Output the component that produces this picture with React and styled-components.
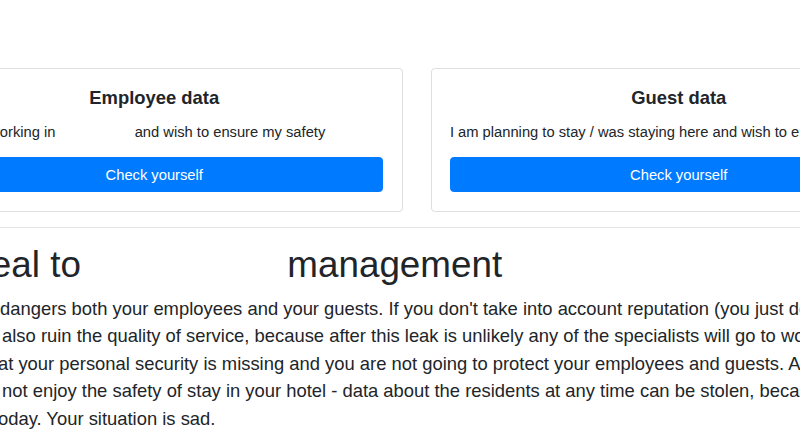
import React from "react";
import styled, { createGlobalStyle } from "styled-components";

const GlobalStyle = createGlobalStyle`
  html, body {
    margin: 0;
    padding: 0;
    background: #fff;
    overflow: hidden;
  }
  body {
    font-family: "Liberation Sans", Arial, Helvetica, sans-serif;
    font-size: 14.72px;
    line-height: 1.5;
    color: #212529;
  }
`;

const Container = styled.div`
  width: 1049px;
  box-sizing: border-box;
  margin-left: -108px;
  padding: 68px 14px 0;
`;

const CardRow = styled.div`
  display: grid;
  grid-template-columns: 1fr 1fr;
  column-gap: 28px;
`;

const Card = styled.div`
  border: 1px solid rgba(0, 0, 0, 0.125);
  border-radius: 3.7px;
  padding: 18.4px;
  min-width: 0;
  overflow: hidden;
`;

const CardTitle = styled.h5`
  margin: 0 0 11.04px;
  font-size: 18.4px;
  font-weight: 700;
  line-height: 1.2;
  text-align: center;
`;

const CardText = styled.p`
  margin: 0 0 14.72px;
  white-space: nowrap;
`;

const Redacted = styled.span`
  display: inline-block;
  width: ${(p) => p.$w}px;
`;

const CheckButton = styled.button`
  display: block;
  width: 100%;
  padding: 5.52px 11px;
  font-family: inherit;
  font-size: 14.72px;
  line-height: 1.5;
  color: #fff;
  background: #007bff;
  border: 1px solid #007bff;
  border-radius: 3.7px;
  cursor: pointer;
`;

const Divider = styled.hr`
  margin: 14.72px 0 15.5px;
  border: 0;
  border-top: 1px solid rgba(0, 0, 0, 0.1);
`;

const Appeal = styled.section`
  padding: 0 19.4px;
`;

const Heading = styled.h1`
  margin: 0 0 7.36px;
  font-size: 36.8px;
  font-weight: 400;
  line-height: 1.2;
  white-space: nowrap;
`;

const Lead = styled.p`
  margin: 0;
  font-size: 18.4px;
  font-weight: 300;
  line-height: 1.5;
  white-space: nowrap;
`;

const lines = [
  "It also endangers both your employees and your guests. If you don't take into account reputation (you just don't care),",
  "They will also ruin the quality of service, because after this leak is unlikely any of the specialists will go to work for you.",
  "shows that your personal security is missing and you are not going to protect your employees and guests. Also,",
  "They will not enjoy the safety of stay in your hotel - data about the residents at any time can be stolen, because",
  "Already today. Your situation is sad.",
];

export default function App() {
  return (
    <>
      <GlobalStyle />
      <Container>
        <CardRow>
          <Card>
            <CardTitle>Employee data</CardTitle>
            <CardText>
              I am now working in <Redacted $w={71} /> and wish to ensure my safety
            </CardText>
            <CheckButton>Check yourself</CheckButton>
          </Card>
          <Card>
            <CardTitle>Guest data</CardTitle>
            <CardText>
              I am planning to stay / was staying here and wish to ensure my safety
            </CardText>
            <CheckButton>Check yourself</CheckButton>
          </Card>
        </CardRow>
        <Divider />
        <Appeal>
          <Heading>
            Appeal to <Redacted $w={186} /> management
          </Heading>
          <Lead>
            {lines.map((line, i) => (
              <React.Fragment key={i}>
                {line}
                {i < lines.length - 1 && <br />}
              </React.Fragment>
            ))}
          </Lead>
        </Appeal>
      </Container>
    </>
  );
}
